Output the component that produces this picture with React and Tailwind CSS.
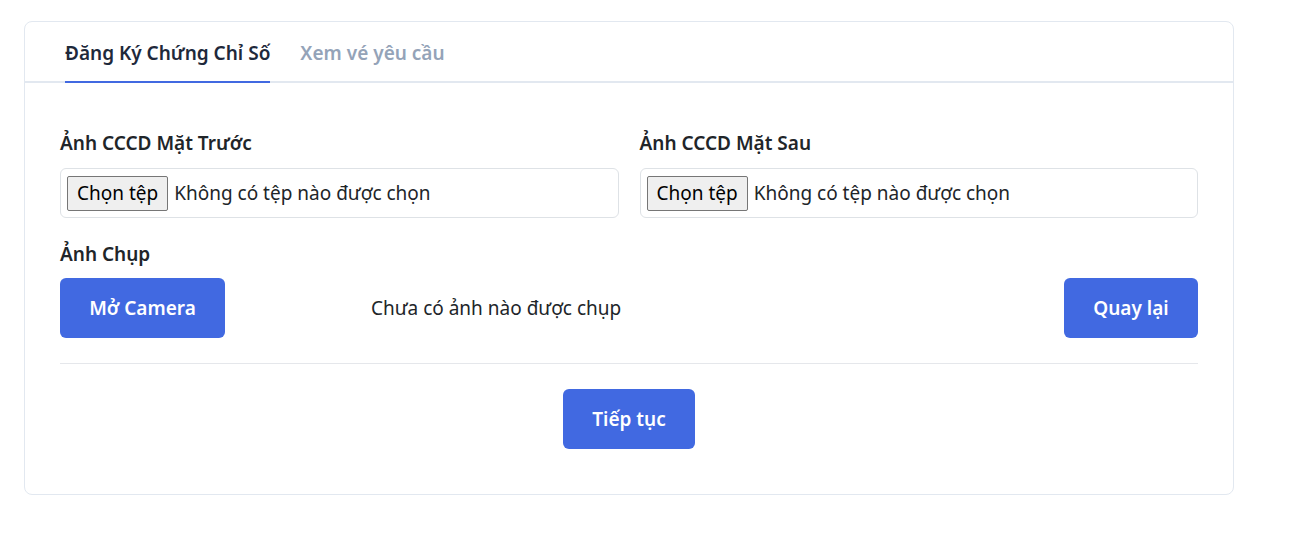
import React, { useState } from 'react';

// File picker that looks like the browser's native input
const FilePicker = () => (
    <div className="flex h-[50px] items-center rounded-md border border-[#dee2e6] bg-white px-[6px]">
        <button className="h-[35px] rounded-[2px] border border-[#767676] bg-[#efefef] px-[9px] text-[19px] text-black">
            Chọn tệp
        </button>
        <span className="ml-[6px] text-[19px] text-[#212529]">Không có tệp nào được chọn</span>
    </div>
);

export default function App() {
    const [tab, setTab] = useState(0);

    return (
        <div className="min-h-screen bg-white pl-6 pt-[21px] pr-[63px]" style={{ fontFamily: '"Noto Sans", "Open Sans", sans-serif' }}>
            <div className="rounded-lg border border-[#e2e8f0] bg-white">
                {/* Tabs */}
                <div className="flex h-[61px] gap-[30px] border-b-2 border-[#e2e8f0] px-10">
                    <button
                        onClick={() => setTab(0)}
                        className={`-mb-[2px] border-b-2 pt-[4px] text-[19px] font-semibold ${tab === 0 ? 'border-[#4169e1] text-[#1e293b]' : 'border-transparent text-[#94a3b8]'}`}
                    >
                        Đăng Ký Chứng Chỉ Số
                    </button>
                    <button
                        onClick={() => setTab(1)}
                        className={`-mb-[2px] border-b-2 pt-[4px] text-[19px] font-semibold ${tab === 1 ? 'border-[#4169e1] text-[#1e293b]' : 'border-transparent text-[#94a3b8]'}`}
                    >
                        Xem vé yêu cầu
                    </button>
                </div>

                <div className="px-[35px] pt-[47px] pb-[45px]">
                    <div className="grid grid-cols-2 gap-x-[21px]">
                        <div>
                            <div className="mb-[11px] text-[19px] leading-[27px] font-semibold text-[#212529]">Ảnh CCCD Mặt Trước</div>
                            <FilePicker />
                        </div>
                        <div>
                            <div className="mb-[11px] text-[19px] leading-[27px] font-semibold text-[#212529]">Ảnh CCCD Mặt Sau</div>
                            <FilePicker />
                        </div>
                    </div>

                    <div className="mt-[23px] mb-[10px] text-[19px] leading-[27px] font-semibold text-[#212529]">Ảnh Chụp</div>
                    <div className="flex items-center">
                        <button className="h-[60px] w-[165px] rounded-md bg-[#4169e1] text-[19px] font-semibold text-white">
                            Mở Camera
                        </button>
                        <span className="ml-[146px] text-[19px] text-[#212529]">Chưa có ảnh nào được chụp</span>
                        <button className="ml-auto h-[60px] w-[134px] rounded-md bg-[#4169e1] text-[19px] font-semibold text-white">
                            Quay lại
                        </button>
                    </div>

                    <div className="mt-[25px] border-t border-[#e5e7eb]" />

                    <div className="mt-[25px] flex justify-center">
                        <button className="h-[60px] w-[132px] rounded-md bg-[#4169e1] text-[19px] font-semibold text-white">
                            Tiếp tục
                        </button>
                    </div>
                </div>
            </div>
        </div>
    );
}
